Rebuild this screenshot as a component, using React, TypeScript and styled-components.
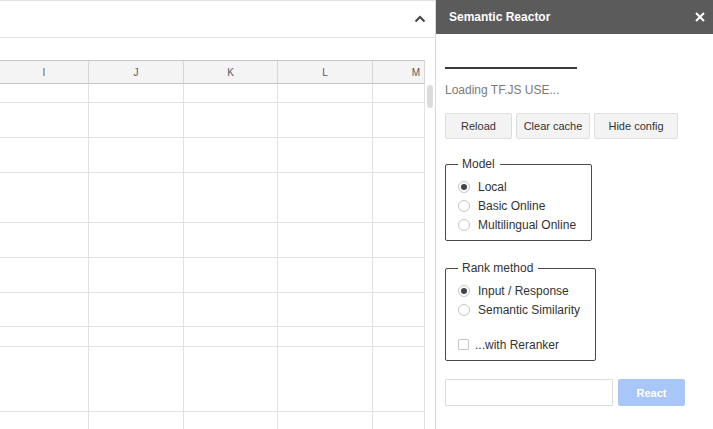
import React from 'react';
import styled, { createGlobalStyle } from 'styled-components';

const GlobalStyle = createGlobalStyle`
  html, body {
    margin: 0;
    padding: 0;
    background: #fff;
    font-family: 'Liberation Sans', Arial, sans-serif;
    overflow: hidden;
  }
`;

const Page = styled.div`
  display: flex;
  width: 713px;
  height: 429px;
  overflow: hidden;
`;

/* ---------- spreadsheet side ---------- */

const Sheet = styled.div`
  width: 436px;
  display: flex;
  flex-direction: column;
  flex-shrink: 0;
  overflow: hidden;
`;

const Toolbar = styled.div`
  height: 36px;
  flex-shrink: 0;
  border-top: 1px solid #e3e3e3;
  border-bottom: 1px solid #e3e3e3;
  display: flex;
  align-items: center;
  justify-content: flex-end;
  padding-right: 10px;
`;

const FormulaRow = styled.div`
  height: 22px;
  flex-shrink: 0;
`;

const GridArea = styled.div`
  flex: 1;
  min-height: 0;
  display: flex;
  overflow: hidden;
`;

const Grid = styled.div`
  width: 425px;
  display: grid;
  grid-template-columns: 89px 95px 94px 95px 52px;
  grid-template-rows: 23px 19px 35px 35px 50px 35px 35px 34px 20px 65px 40px;
  border-top: 1px solid #c8c8c8;
`;

const HeadCell = styled.div<{ $edge?: boolean }>`
  background: #f4f4f4;
  border-bottom: 1px solid #c4c4c4;
  border-right: 1px solid #d6d6d6;
  font-size: 10px;
  color: #5a5a5a;
  display: flex;
  align-items: center;
  justify-content: ${(p) => (p.$edge ? 'flex-end' : 'center')};
  padding-right: ${(p) => (p.$edge ? '4px' : '0')};
`;

const Cell = styled.div`
  border-bottom: 1px solid #e2e2e2;
  border-right: 1px solid #e2e2e2;
`;

const ScrollTrack = styled.div`
  width: 10px;
  border-right: 1px solid #e2e2e2;
  padding-top: 25px;
  display: flex;
  justify-content: center;
`;

const ScrollThumb = styled.div`
  width: 6px;
  height: 23px;
  border-radius: 3px;
  background: #dcdcdc;
`;

/* ---------- add-on panel ---------- */

const Panel = styled.div`
  flex: 1;
  display: flex;
  flex-direction: column;
  border-left: 1px solid #dadada;
  margin-left: -1px;
`;

const PanelHeader = styled.div`
  height: 34px;
  background: #5b5b5b;
  display: flex;
  align-items: center;
  justify-content: space-between;
  padding: 0 8px 0 13px;
  color: #fff;
`;

const PanelTitle = styled.span`
  font-size: 12px;
  font-weight: bold;
`;

const PanelBody = styled.div`
  padding: 33px 0 0 9px;
  display: flex;
  flex-direction: column;
  align-items: flex-start;
`;

const Progress = styled.div`
  width: 132px;
  height: 2px;
  background: #3a3a3a;
`;

const Status = styled.div`
  margin-top: 14px;
  font-size: 12px;
  color: #7a7a7a;
  line-height: 14px;
`;

const ButtonRow = styled.div`
  display: flex;
  gap: 4px;
  margin-top: 16px;
`;

const Button = styled.button<{ $w: number }>`
  width: ${(p) => p.$w}px;
  height: 26px;
  background: #f3f3f3;
  border: 1px solid #dedede;
  border-radius: 2px;
  font-family: 'Liberation Sans', Arial, sans-serif;
  font-size: 11px;
  color: #333;
  padding: 0;
`;

const Group = styled.fieldset<{ $w: number; $top: number }>`
  width: ${(p) => p.$w}px;
  box-sizing: border-box;
  margin: ${(p) => p.$top}px 0 0 0;
  padding: 6px 0 6px 12px;
  border: 1px solid #4a4a4a;
  border-radius: 2px;
  min-width: 0;
`;

const Legend = styled.legend`
  font-size: 12px;
  line-height: 14px;
  color: #333;
  padding: 0 5px 0 4px;
  margin-left: 0;
`;

const Option = styled.label<{ $gap?: number }>`
  display: flex;
  align-items: center;
  height: 19px;
  margin-top: ${(p) => p.$gap ?? 0}px;
  font-size: 12px;
  color: #333;
`;

const Radio = styled.span<{ $on?: boolean }>`
  width: 12px;
  height: 12px;
  box-sizing: border-box;
  border: 1px solid #c6c6c6;
  border-radius: 50%;
  margin-right: 8px;
  display: flex;
  align-items: center;
  justify-content: center;
  &::after {
    content: '';
    width: 6px;
    height: 6px;
    border-radius: 50%;
    background: ${(p) => (p.$on ? '#444' : 'transparent')};
  }
`;

const Check = styled.span`
  width: 11px;
  height: 11px;
  box-sizing: border-box;
  border: 1px solid #c6c6c6;
  border-radius: 1px;
  margin-right: 6px;
`;

const ActionRow = styled.div`
  display: flex;
  gap: 5px;
  margin-top: 18px;
`;

const TextInput = styled.input`
  width: 168px;
  height: 27px;
  box-sizing: border-box;
  border: 1px solid #dcdcdc;
  border-radius: 1px;
  outline: none;
`;

const ReactButton = styled.button`
  width: 67px;
  height: 27px;
  background: #a8c7f8;
  border: none;
  border-radius: 2px;
  color: #fff;
  font-family: 'Liberation Sans', Arial, sans-serif;
  font-size: 11px;
  font-weight: bold;
`;

const columns = ['I', 'J', 'K', 'L', 'M'];
const rowCount = 10;

export default function App() {
  return (
    <Page>
      <GlobalStyle />
      <Sheet>
        <Toolbar>
          <svg width="12" height="8" viewBox="0 0 12 8">
            <polyline points="1.5,6.5 6,2 10.5,6.5" fill="none" stroke="#444" strokeWidth="2" />
          </svg>
        </Toolbar>
        <FormulaRow />
        <GridArea>
          <Grid>
            {columns.map((c, i) => (
              <HeadCell key={c} $edge={i === columns.length - 1}>
                {c}
              </HeadCell>
            ))}
            {Array.from({ length: rowCount * columns.length }).map((_, i) => (
              <Cell key={i} />
            ))}
          </Grid>
          <ScrollTrack>
            <ScrollThumb />
          </ScrollTrack>
        </GridArea>
      </Sheet>

      <Panel>
        <PanelHeader>
          <PanelTitle>Semantic Reactor</PanelTitle>
          <svg width="10" height="10" viewBox="0 0 10 10">
            <path d="M1 1 L9 9 M9 1 L1 9" stroke="#fff" strokeWidth="2" />
          </svg>
        </PanelHeader>
        <PanelBody>
          <Progress />
          <Status>Loading TF.JS USE...</Status>
          <ButtonRow>
            <Button $w={67}>Reload</Button>
            <Button $w={74}>Clear cache</Button>
            <Button $w={84}>Hide config</Button>
          </ButtonRow>

          <Group $w={147} $top={18}>
            <Legend>Model</Legend>
            <Option>
              <Radio $on />
              Local
            </Option>
            <Option>
              <Radio />
              Basic Online
            </Option>
            <Option>
              <Radio />
              Multilingual Online
            </Option>
          </Group>

          <Group $w={151} $top={20}>
            <Legend>Rank method</Legend>
            <Option>
              <Radio $on />
              Input / Response
            </Option>
            <Option>
              <Radio />
              Semantic Similarity
            </Option>
            <Option $gap={16}>
              <Check />
              ...with Reranker
            </Option>
          </Group>

          <ActionRow>
            <TextInput />
            <ReactButton>React</ReactButton>
          </ActionRow>
        </PanelBody>
      </Panel>
    </Page>
  );
}
